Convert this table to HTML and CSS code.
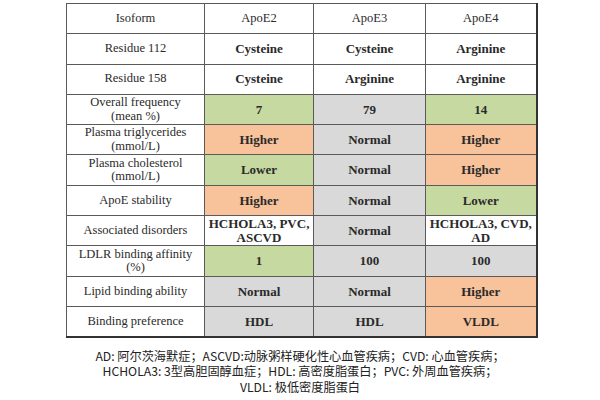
FILE: index.html
```html
<!DOCTYPE html>
<html>
<head>
<meta charset="utf-8">
<link rel="stylesheet" href="styles.css">
</head>
<body>
<div class="page">
<table class="apoe">
<colgroup><col class="c1"><col class="c2"><col class="c3"><col class="c4"></colgroup>
<tr><td>Isoform</td><td>ApoE2</td><td>ApoE3</td><td>ApoE4</td></tr>
<tr><td>Residue 112</td><td class="b">Cysteine</td><td class="b">Cysteine</td><td class="b">Arginine</td></tr>
<tr><td>Residue 158</td><td class="b">Cysteine</td><td class="b">Arginine</td><td class="b">Arginine</td></tr>
<tr><td>Overall frequency<br>(mean %)</td><td class="b g">7</td><td class="b n">79</td><td class="b g">14</td></tr>
<tr><td>Plasma triglycerides<br>(mmol/L)</td><td class="b o">Higher</td><td class="b n">Normal</td><td class="b o">Higher</td></tr>
<tr><td>Plasma cholesterol<br>(mmol/L)</td><td class="b g">Lower</td><td class="b n">Normal</td><td class="b o">Higher</td></tr>
<tr><td>ApoE stability</td><td class="b o">Higher</td><td class="b n">Normal</td><td class="b g">Lower</td></tr>
<tr><td>Associated disorders</td><td class="b">HCHOLA3, PVC,<br>ASCVD</td><td class="b n">Normal</td><td class="b">HCHOLA3, CVD,<br>AD</td></tr>
<tr><td>LDLR binding affinity<br>(%)</td><td class="b g">1</td><td class="b n">100</td><td class="b n">100</td></tr>
<tr><td>Lipid binding ability</td><td class="b n">Normal</td><td class="b n">Normal</td><td class="b o">Higher</td></tr>
<tr><td>Binding preference</td><td class="b n">HDL</td><td class="b n">HDL</td><td class="b o">VLDL</td></tr>
</table>
<p class="note">AD: 阿尔茨海默症；ASCVD:动脉粥样硬化性心血管疾病；CVD: 心血管疾病；<br>HCHOLA3: 3型高胆固醇血症；HDL: 高密度脂蛋白；PVC: 外周血管疾病；<br>VLDL: 极低密度脂蛋白</p>
</div>
</body>
</html>
```
FILE: styles.css
```css
html, body {
  margin: 0;
  padding: 0;
  background: #ffffff;
}
.page {
  width: 600px;
  height: 400px;
  padding-top: 3px;
  box-sizing: border-box;
  overflow: hidden;
}
.apoe {
  margin-left: 66px;
  border-collapse: collapse;
  table-layout: fixed;
  width: 470px;
  font-family: "Liberation Serif", serif;
  font-size: 12.5px;
  color: #2a2a2a;
}
.c1 { width: 138px; }
.c2 { width: 109px; }
.c3 { width: 112px; }
.c4 { width: 111px; }
.apoe tr { height: 30.3px; }
.apoe td {
  border: 1px solid #5a5a5a;
  padding: 0;
  text-align: center;
  vertical-align: middle;
  line-height: 13.5px;
  white-space: nowrap;
}
.apoe tr td:last-child { border-right: 2px solid #333; }
.apoe tr:last-child td { border-bottom: 2px solid #333; }
.apoe td.b { font-weight: bold; font-size: 13px; }
.apoe td.g { background: #c6d9a0; }
.apoe td.o { background: #f8c29b; }
.apoe td.n { background: #d9d9d9; }
.note {
  margin: 11px 0 0;
  text-align: center;
  font-family: "Noto Sans CJK SC", "Noto Sans", sans-serif;
  font-size: 12.2px;
  line-height: 15.5px;
  color: #222;
}
```
